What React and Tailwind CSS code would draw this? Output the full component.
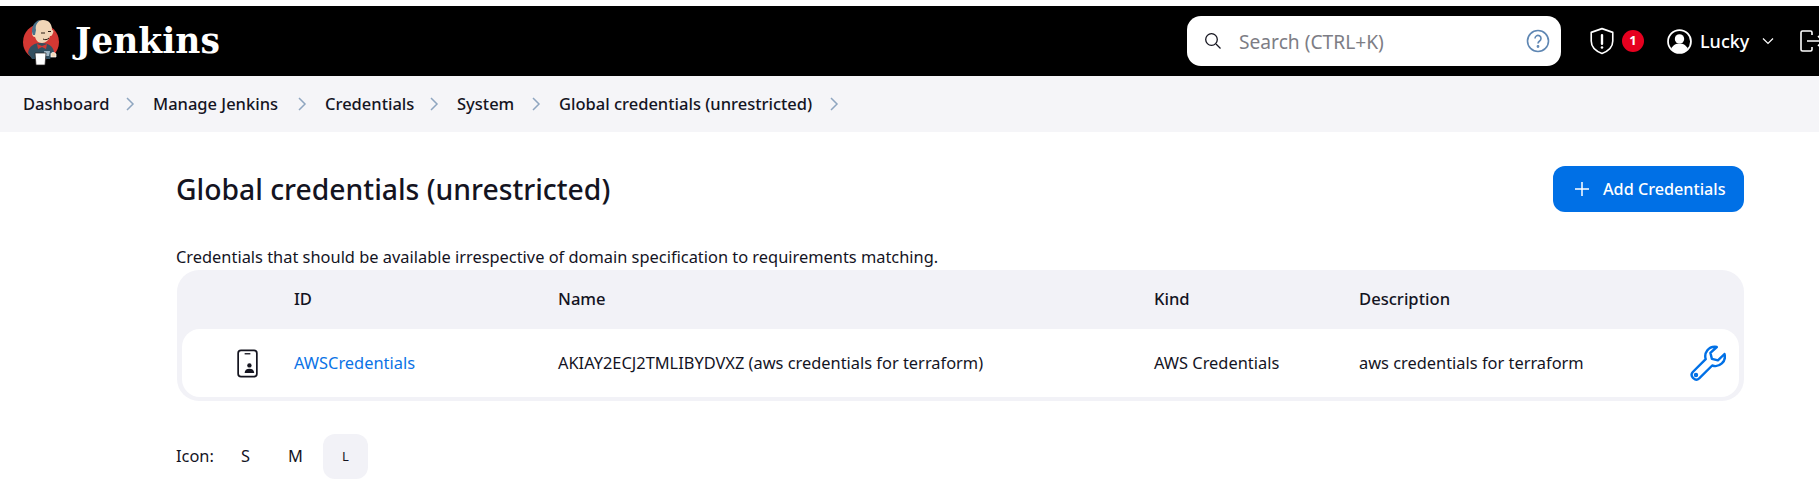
import React from "react";

function Logo() {
  return (
    <svg width="40" height="50" viewBox="0 0 40 50" className="shrink-0">
      <circle cx="19" cy="26" r="18" fill="#d33833" />
      <path d="M6 37c1-7 6-10 13-10s12 3 13 9l-4 7H10z" fill="#335061" />
      <path d="M12 15c0-7 3-11 9-11s9 4 9 10c1 0 2 1 1 3-1 3-2 3-3 3-1 4-4 7-8 7-4 0-6-3-7-6-2 0-3-2-3-4 0-1 1-2 2-2z" fill="#f0d6b7" />
      <path d="M11 19c-2-4-1-10 3-13 2-2 4-2 5-2-4 2-6 6-5 10l-1 5z" fill="#49728b" />
      <path d="M19 17h4M26 15.500h3M21 23c2 1 4 1 6-1" stroke="#2b1c13" strokeWidth="1" fill="none" />
      <path d="M15 28l5 2 5-2-1 5-4-2-4 2z" fill="#d33833" />
      <path d="M22 35h6l-1 5h-4z" fill="#9fb5c4" />
      <path d="M13 37h11l-1 12h-9z" fill="#fff" stroke="#231f20" strokeWidth="0.7" />
      <path d="M29 38c0-2 4-2 5 0v3h-5z" fill="#f0d6b7" stroke="#fff" strokeWidth="0.7" />
    </svg>
  );
}

function Chevron() {
  return (
    <svg width="16" height="16" viewBox="0 0 16 16" fill="none" stroke="#8fa6c0" strokeWidth="1.500" className="shrink-0">
      <path d="M5 2 11 8l-6 6" />
    </svg>
  );
}

const crumbs = [
  ["Dashboard", "w-[99px]"],
  ["Manage Jenkins", "w-[141px]"],
  ["Credentials", "w-[101px]"],
  ["System", "w-[71px]"],
  ["Global credentials (unrestricted)", "w-[267px]"],
];

export default function App() {
  return (
    <div className="w-[1819px] h-[483px] overflow-hidden bg-white text-[#14141f] font-['Noto_Sans',sans-serif]">
      <div className="h-[6px] bg-white" />
      <header className="h-[70px] bg-black text-white flex items-center overflow-hidden">
        <div className="flex items-center pl-[22px] w-[1187px] shrink-0">
          <Logo />
          <span className="ml-[13px] font-['DejaVu_Serif',serif] font-bold text-[34.500px] leading-none">Jenkins</span>
        </div>
        <div className="w-[374px] h-[50px] shrink-0 bg-white rounded-[14px] flex items-center text-[#7d7d85] pl-[17px] pr-[11px]">
          <svg width="18" height="18" viewBox="0 0 18 18" fill="none" stroke="#14141f" strokeWidth="1.300">
            <circle cx="7.500" cy="7.500" r="5.800" />
            <path d="M12 12l4.500 4.500" />
          </svg>
          <span className="ml-[17px] text-[19.200px] leading-[28px] pt-[2px] flex-1">Search (CTRL+K)</span>
          <svg width="24" height="24" viewBox="0 0 24 24" fill="none" stroke="#5f87b3" strokeWidth="1.600">
            <circle cx="12" cy="12" r="10.500" />
            <path d="M9 9.500a3 3 0 1 1 4.600 2.500c-1 .7-1.600 1.200-1.600 2.500" />
            <circle cx="12" cy="17.500" r="0.600" fill="#5f87b3" />
          </svg>
        </div>
        <svg width="28" height="28" viewBox="0 0 24 26" fill="none" stroke="white" strokeWidth="1.500" className="ml-[27px] shrink-0">
          <path d="M12 1.500l10 3.500v8c0 5.500-4.500 9.500-10 11.500C6.500 22.500 2 18.500 2 13V5z" strokeLinejoin="round" />
          <path d="M12 7.500v8" strokeWidth="2.200" strokeLinecap="round" />
          <circle cx="12" cy="19" r="1.200" fill="white" stroke="none" />
        </svg>
        <span className="ml-[6px] w-[22px] h-[22px] rounded-full bg-[#e6001f] text-white text-[13px] font-bold flex items-center justify-center shrink-0">1</span>
        <svg width="25" height="25" viewBox="0 0 24 24" className="ml-[23px] shrink-0">
          <circle cx="12" cy="12" r="11" fill="none" stroke="white" strokeWidth="1.700" />
          <circle cx="12" cy="9.500" r="4.500" fill="white" />
          <path d="M4 19c2-4 5-5 8-5s6 1 8 5c-2 2.500-5 4-8 4s-6-1.500-8-4z" fill="white" />
        </svg>
        <span className="ml-[8px] w-[49px] text-[18px] font-medium shrink-0">Lucky</span>
        <svg width="12" height="12" viewBox="0 0 12 12" fill="none" stroke="white" strokeWidth="1.200" className="ml-[13px] shrink-0">
          <path d="M1 3.500l5 5 5-5" />
        </svg>
        <svg width="26" height="24" viewBox="0 0 26 24" fill="none" stroke="white" strokeWidth="1.600" className="ml-[25px] shrink-0">
          <path d="M13 6V3.500A1.500 1.500 0 0 0 11.500 2h-8A1.500 1.500 0 0 0 2 3.500v17A1.500 1.500 0 0 0 3.500 22h8a1.500 1.500 0 0 0 1.500-1.500V18" />
          <path d="M8 12h16M19 7l5 5-5 5" />
        </svg>
      </header>

      <nav className="h-[56px] bg-[#f5f5f8] flex items-center pl-[23px] text-[16.500px] font-medium">
        {crumbs.map(([c, w]) => (
          <React.Fragment key={c}>
            <span className={`${w} shrink-0 whitespace-nowrap`}>{c}</span>
            <Chevron />
            <span className="w-[15px] shrink-0" />
          </React.Fragment>
        ))}
      </nav>

      <main className="pl-[176px] pr-[75px]">
        <div className="flex items-start justify-between pt-[34px]">
          <h1 className="text-[28.300px] font-medium leading-[46px]">Global credentials (unrestricted)</h1>
          <button className="w-[191px] h-[46px] rounded-[12px] bg-[#0070e6] text-white flex items-center pl-[21px] text-[16.200px] font-medium">
            <svg width="16" height="16" viewBox="0 0 16 16" fill="none" stroke="white" strokeWidth="1.500">
              <path d="M8 1v14M1 8h14" />
            </svg>
            <span className="ml-[13px]">Add Credentials</span>
          </button>
        </div>
        <p className="mt-[33px] text-[16.400px] leading-[24px]">Credentials that should be available irrespective of domain specification to requirements matching.</p>
        <div className="mt-[1px] ml-[1px] rounded-[22px] bg-[#f2f2f7] px-[5px] pb-[4px]">
          <div className="h-[59px] grid grid-cols-[112px_264px_596px_205px_1fr] items-center text-[16.600px] font-medium">
            <span />
            <span>ID</span>
            <span>Name</span>
            <span>Kind</span>
            <span>Description</span>
          </div>
          <div className="h-[68px] bg-white rounded-[18px] grid grid-cols-[112px_264px_596px_205px_1fr_auto] items-center text-[16.400px] pr-[13px]">
            <span className="flex justify-center pl-[18px]">
              <svg width="21" height="29" viewBox="0 0 22 30" fill="none">
                <rect x="1.200" y="1.200" width="19.600" height="27.600" rx="3" stroke="#14141f" strokeWidth="1.800" />
                <path d="M8 4.800h6" stroke="#14141f" strokeWidth="1.400" />
                <circle cx="13" cy="17" r="2.300" fill="#14141f" />
                <path d="M8 25c0-3 2-4.500 5-4.500s5 1.500 5 4.500z" fill="#14141f" />
              </svg>
            </span>
            <a className="text-[#0b73e6]">AWSCredentials</a>
            <span>AKIAY2ECJ2TMLIBYDVXZ (aws credentials for terraform)</span>
            <span>AWS Credentials</span>
            <span>aws credentials for terraform</span>
            <svg width="36" height="36" viewBox="0 0 36 36" fill="none" stroke="#0070e6" strokeWidth="2.400" strokeLinejoin="round">
              <path d="M25 1.800a9.500 9.500 0 0 0-9.300 12.300L2.800 27a4.200 4.200 0 0 0 0 5.600l.8.800a4.200 4.200 0 0 0 5.600 0l13-12.900A9.500 9.500 0 0 0 34.500 9l-6.600 6.400-6-1.500-1.500-6L26.800 2a9 9 0 0 0-1.800-.2z" />
              <circle cx="6" cy="30" r="1" />
            </svg>
          </div>
        </div>
        <div className="mt-[33px] flex items-center text-[16.400px]">
          <span className="w-[47px]">Icon:</span>
          <span className="w-[45px] h-[45px] flex items-center justify-center">S</span>
          <span className="w-[45px] h-[45px] ml-[5px] flex items-center justify-center">M</span>
          <span className="w-[45px] h-[45px] ml-[5px] rounded-[12px] bg-[#f2f2f7] flex items-center justify-center text-[13px]">L</span>
        </div>
      </main>
    </div>
  );
}
